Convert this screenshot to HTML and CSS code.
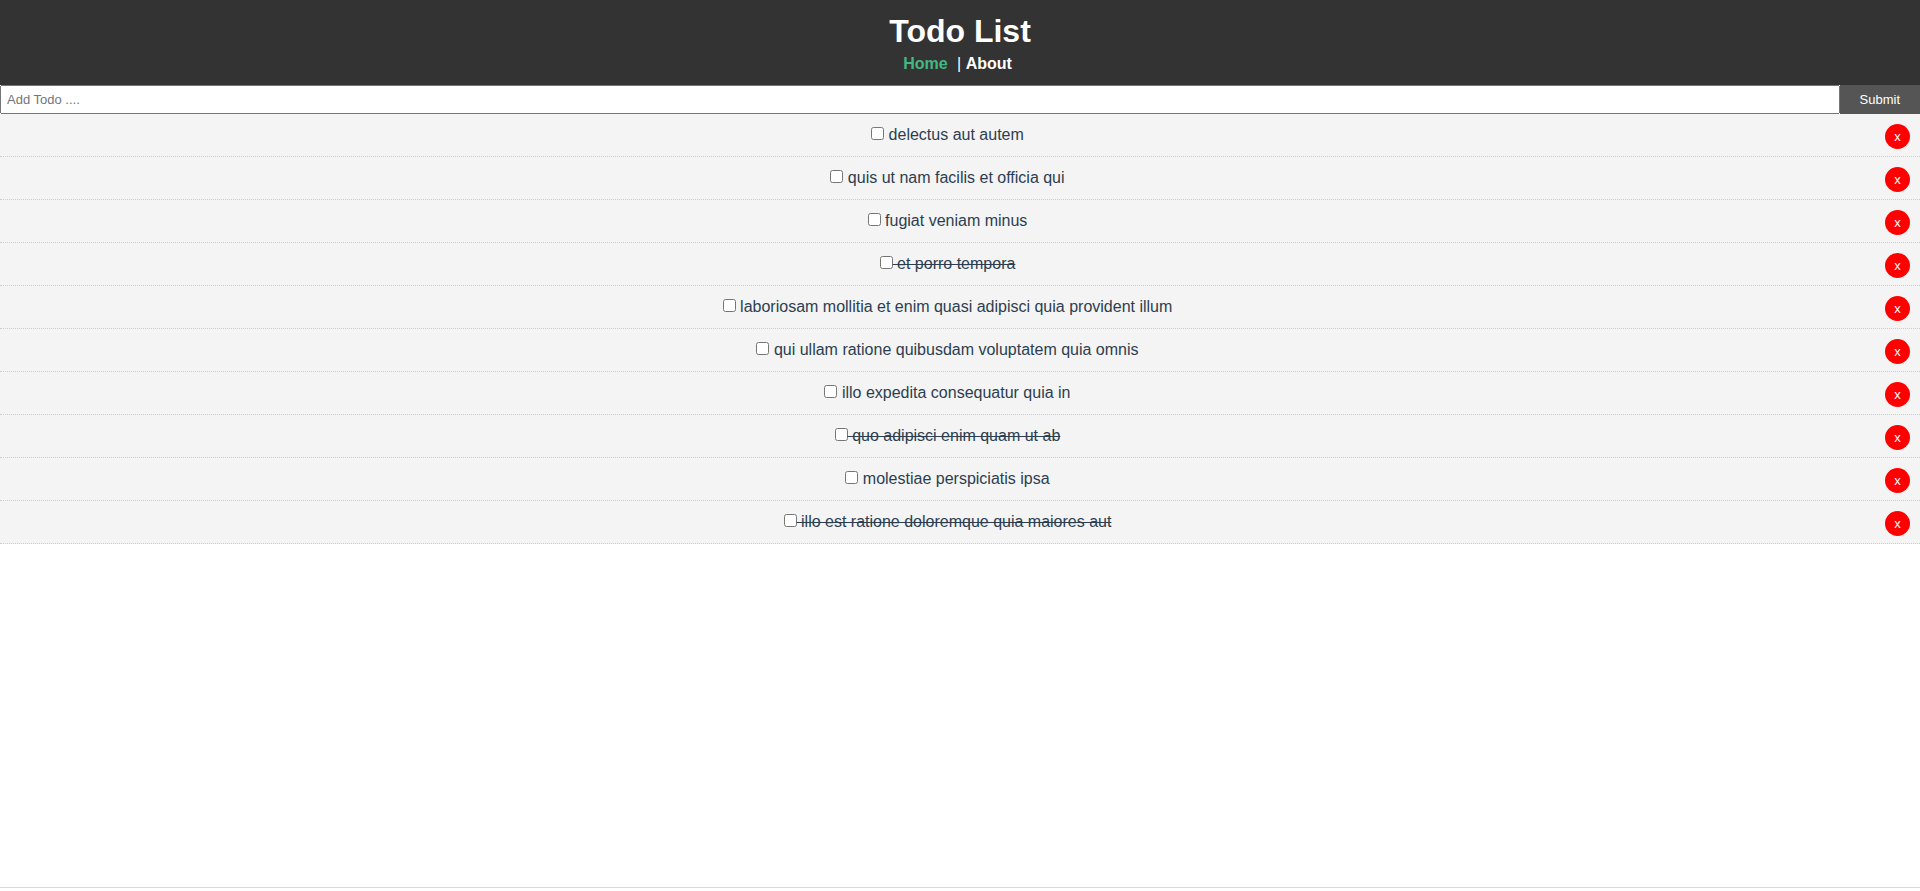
FILE: index.html
```html
<!DOCTYPE html>
<html lang="en">
<head>
<meta charset="utf-8">
<title>Todo List</title>
<link rel="stylesheet" href="styles.css">
</head>
<body>
<div class="app">
<header class="header">
<h1>Todo List</h1>
<nav class="nav"><a class="active" href="#home">Home</a> | <a href="#about">About</a></nav>
</header>
<form class="add-todo">
<input class="add-input" type="text" aria-label="Add Todo" placeholder="Add Todo ....">
<button class="submit" type="button">Submit</button>
</form>
<main>
<div class="todo-item"><button class="del" type="button">x</button><label><input type="checkbox"> delectus aut autem</label></div>
<div class="todo-item"><button class="del" type="button">x</button><label><input type="checkbox"> quis ut nam facilis et officia qui</label></div>
<div class="todo-item"><button class="del" type="button">x</button><label><input type="checkbox"> fugiat veniam minus</label></div>
<div class="todo-item done"><button class="del" type="button">x</button><label><input type="checkbox"> et porro tempora</label></div>
<div class="todo-item"><button class="del" type="button">x</button><label><input type="checkbox"> laboriosam mollitia et enim quasi adipisci quia provident illum</label></div>
<div class="todo-item"><button class="del" type="button">x</button><label><input type="checkbox"> qui ullam ratione quibusdam voluptatem quia omnis</label></div>
<div class="todo-item"><button class="del" type="button">x</button><label><input type="checkbox"> illo expedita consequatur quia in</label></div>
<div class="todo-item done"><button class="del" type="button">x</button><label><input type="checkbox"> quo adipisci enim quam ut ab</label></div>
<div class="todo-item"><button class="del" type="button">x</button><label><input type="checkbox"> molestiae perspiciatis ipsa</label></div>
<div class="todo-item done"><button class="del" type="button">x</button><label><input type="checkbox"> illo est ratione doloremque quia maiores aut</label></div>
</main>
</div>
</body>
</html>
```
FILE: styles.css
```css
* {
  box-sizing: border-box;
  margin: 0;
  padding: 0;
}
body {
  font-family: "Liberation Sans", Arial, sans-serif;
  line-height: 22px;
  background: #fff;
}
.app {
  min-height: calc(100vh - 3px);
  color: #2c3e50;
  text-align: center;
  border-bottom: 1px solid #d9d9d9;
}
.header {
  background: #333;
  color: #fff;
  padding: 10px;
}
.header h1 {
  font-size: 32px;
  line-height: 43px;
}
.nav a {
  color: #fff;
  font-weight: bold;
  text-decoration: none;
  padding-right: 5px;
}
.nav .active {
  color: #42b983;
}
.add-todo {
  display: flex;
}
.add-input {
  flex: 1;
  padding: 5px;
  font: 13px/15px "Liberation Sans", Arial, sans-serif;
}
.submit {
  border: none;
  background: #555;
  color: #fff;
  padding: 7px 20px;
  font: 13px/15px "Liberation Sans", Arial, sans-serif;
  cursor: pointer;
}
.todo-item {
  background: #f4f4f4;
  padding: 10px;
  border-bottom: 1px dotted #ccc;
}
.done {
  text-decoration: line-through;
}
.del {
  float: right;
  min-width: 25px;
  background: #f00;
  color: #fff;
  border: none;
  border-radius: 50%;
  padding: 5px 9px;
  font: 13px/15px "Liberation Sans", Arial, sans-serif;
  cursor: pointer;
}
```
